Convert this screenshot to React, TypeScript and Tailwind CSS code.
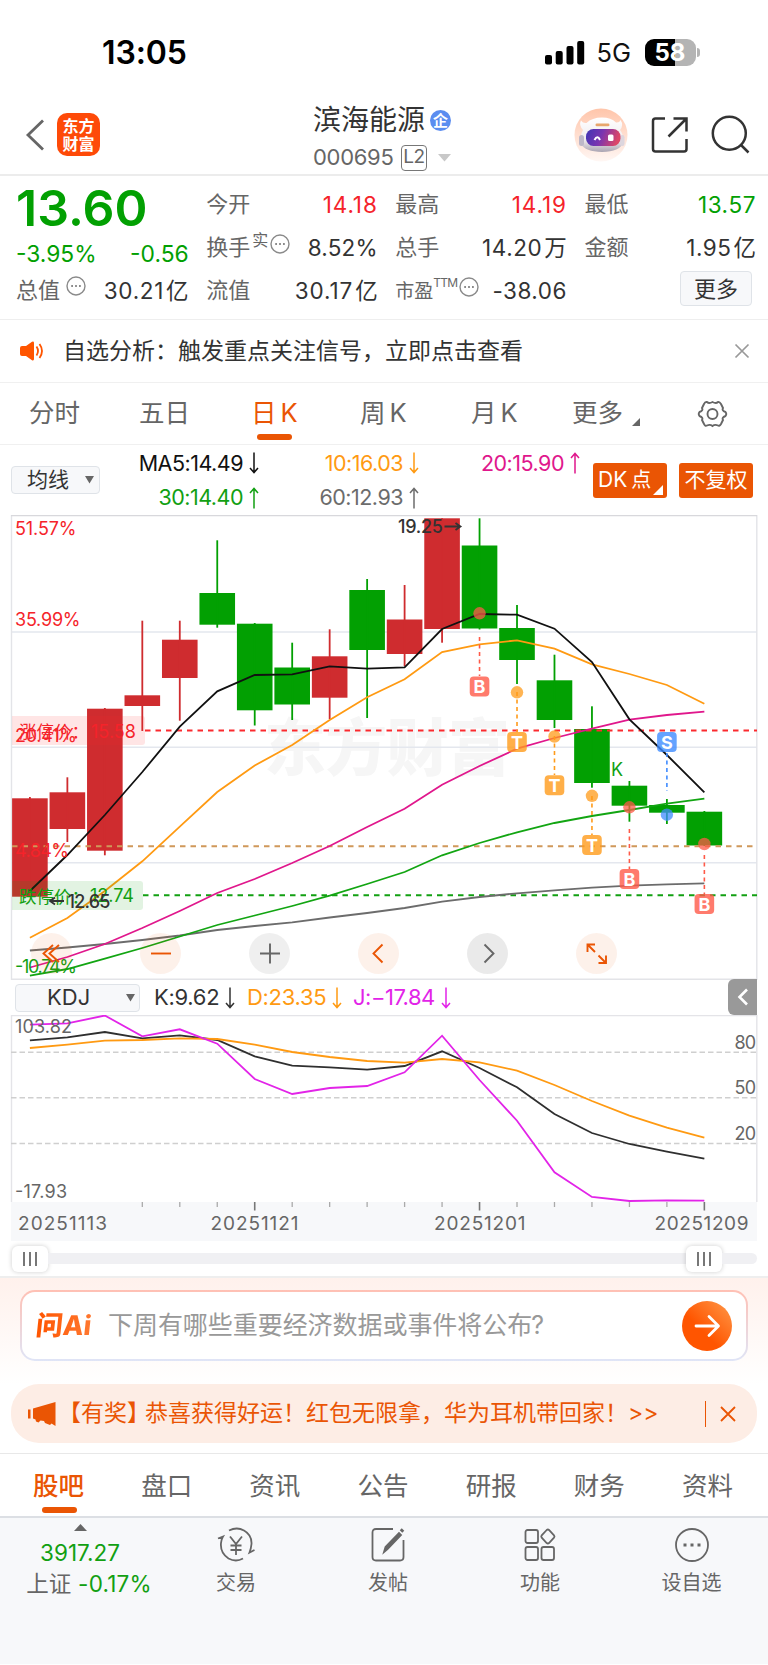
import React from "react";

const RED = "#cf2c2f";
const GREEN = "#02a002";

const px = (i: number) => 29.9 + 37.47 * i;

// colour, body top, body bottom, wick top, wick bottom
const candles: [string, number, number, number, number][] = [
  [RED, 798.3, 896.7, 797, 897],
  [RED, 792.3, 829, 777.3, 842],
  [RED, 708.7, 850.7, 708, 855.3],
  [RED, 695.3, 706, 620.7, 731],
  [RED, 639.7, 678, 620.7, 720.7],
  [GREEN, 593, 624.7, 540.3, 627.7],
  [GREEN, 623.7, 710.3, 623, 725.5],
  [GREEN, 667.5, 704.5, 642.7, 720],
  [RED, 656.3, 697.7, 629.3, 719],
  [GREEN, 590, 650, 579, 718],
  [RED, 619.5, 654, 585, 666],
  [RED, 518.3, 629, 518.3, 642.7],
  [GREEN, 545.5, 628.5, 518.3, 629.5],
  [GREEN, 628, 660, 605, 684],
  [GREEN, 680.3, 720, 654.7, 728],
  [GREEN, 729, 783, 706.3, 787.7],
  [GREEN, 785.7, 805.7, 781, 821.7],
  [GREEN, 805, 812.7, 799, 824],
  [GREEN, 811.7, 845.5, 811, 846],
];

const averages: [string, number[]][] = [
  ["#6c6c6c", [950.5, 947.5, 944, 940, 935.5, 930, 926, 922.3, 917.5, 913, 908, 901.7, 897, 893.3, 890.3, 887.7, 885.7, 884.3, 883.3]],
  ["#12a512", [975.7, 969, 958.7, 948, 936.5, 925, 915.5, 906, 895.7, 884, 872, 855.3, 843, 832.3, 823, 816, 810, 803.7, 798.7]],
  ["#e0178c", [967.5, 957, 944, 928, 911, 893, 879, 863, 846, 827, 808.7, 784.7, 766, 748.7, 738, 728.7, 719.7, 715, 711.7]],
  ["#ff9a12", [937.7, 918, 891, 861.3, 826.7, 792, 765.5, 745, 720, 697.3, 679.3, 652, 644.3, 640.3, 648.7, 664.3, 674, 685, 703.7]],
  ["#111111", [891, 855, 815, 772, 726.7, 691.3, 675, 674.3, 666.3, 668.7, 667.3, 629, 614, 614.7, 628.7, 662, 719.3, 755, 792.3]],
];

const kdj: [string, number[]][] = [
  ["#2f2f2f", [1040.3, 1037.3, 1032, 1038.3, 1035.3, 1040, 1056.3, 1065.7, 1067.3, 1069.7, 1066, 1051.3, 1068, 1087.3, 1114, 1133, 1144, 1151.7, 1158.7]],
  ["#ff9a12", [1048, 1044.7, 1040.7, 1040, 1038.3, 1039, 1044.7, 1052, 1057, 1061, 1062.7, 1059, 1062.3, 1070.7, 1085, 1101, 1115.7, 1127.7, 1137.7]],
  ["#e224e8", [1024.7, 1023.3, 1015.5, 1036.3, 1029.3, 1043.7, 1079, 1094, 1088, 1086, 1072.3, 1035.7, 1080, 1120.7, 1172.3, 1197, 1201, 1200.3, 1200.7]],
];

// label, candle index, badge y, dot y, dash from, dash to, colour
const marks: [string, number, number, number, number, number, string][] = [
  ["B", 12, 686.5, 613.3, 637, 676, "#ff5a48"],
  ["T", 13, 742, 692.3, 692, 732, "#ff9b1a"],
  ["T", 14, 785.3, 736.5, 736, 775, "#ff9b1a"],
  ["T", 15, 845, 795.8, 796, 835, "#ff9b1a"],
  ["B", 16, 879, 807.3, 829, 869, "#ff5a48"],
  ["S", 17, 742, 814.7, 753, 791, "#3f8cff"],
  ["B", 18, 904, 844, 855, 894, "#ff5a48"],
];

const line = (ys: number[]) => ys.map((y, i) => `${px(i)},${y}`).join(" ");

function Txt({ x, y, w, fill, size = 18, weight = 400, children }: { x: number; y: number; w?: number; fill: string; size?: number; weight?: number; children: string }) {
  return (
    <text x={x} y={y} fill={fill} fontSize={size} fontWeight={weight} textLength={w} lengthAdjust="spacing">
      {children}
    </text>
  );
}

function PriceChart() {
  return (
    <svg className="block" width="768" height="465" viewBox="0 515 768 465">
      <text x="264" y="771" fontSize="62" fontWeight="900" fill="#f6f6f6" textLength="246">东方财富</text>
      <g stroke="#e4e7ee" strokeWidth="1.6">
        <path d="M11 632H757M11 747.2H757M11 862.7H757" />
      </g>
      <path d="M11.5 515V979.3H756.8V515" fill="none" stroke="#e3e4e8" strokeWidth="1.4" />
      <path d="M11 515.5H757" stroke="#d8d8dc" strokeWidth="1.6" />
      {candles.map(([c, t, b, wt, wb], i) => (
        <g key={i} fill={c}>
          <rect x={px(i) - 17.8} y={t} width="35.6" height={b - t} />
          <rect x={px(i) - 0.9} y={wt} width="1.8" height={wb - wt} />
        </g>
      ))}
      <g fill="none" strokeWidth="2" strokeDasharray="5.5 5">
        <path d="M145 730.5H757" stroke="#fb2a2f" />
        <path d="M12 846.2H757" stroke="#d0985a" />
        <path d="M143 895.3H757" stroke="#12a012" />
      </g>
      {averages.map(([c, ys]) => (
        <polyline key={c} points={line(ys)} fill="none" stroke={c} strokeWidth="1.8" />
      ))}
      <path d="M12 716H142q3 0 3 3V742q0 3-3 3H12Z" fill="#ff2a2a" fillOpacity="0.12" />
      <path d="M12 881H140q3 0 3 3V907q0 3-3 3H12Z" fill="#10a010" fillOpacity="0.12" />
      <Txt x={19} y={738} fill="#f5232a" size={17.5}>涨停价：</Txt>
      <Txt x={91} y={737.5} w={45} fill="#f5232a" size={18}>15.58</Txt>
      <Txt x={15} y={535} w={61.5} fill="#f5232a">51.57%</Txt>
      <Txt x={15} y={626} w={65.5} fill="#f5232a">35.99%</Txt>
      <Txt x={15} y={742} w={62} fill="#f5232a">20.41%</Txt>
      <Txt x={15} y={857} w={54} fill="#f5232a">4.84%</Txt>
      <Txt x={15} y={973} w={62} fill="#12a012">-10.74%</Txt>
      <Txt x={19} y={903} fill="#12a012" size={17.5}>跌停价：</Txt>
      <Txt x={90} y={902} w={44} fill="#12a012" size={18}>12.74</Txt>
      <Txt x={67.5} y={908} w={43} fill="#333333" size={18} weight={500}>12.65</Txt>
      <path d="M64 901H50M55 897.5L50 901L55 904.5" fill="none" stroke="#333" strokeWidth="1.8" />
      <Txt x={398} y={533} w={45} fill="#333333" size={18} weight={500}>19.25</Txt>
      <path d="M444.500 526.500H460M455.500 523L460.500 526.500L455.500 530" fill="none" stroke="#333" strokeWidth="1.8" />
      <Txt x={611} y={776} fill="#12a012" size={18}>K</Txt>
      {marks.map(([l, i, by, dy, a, b, c], n) => (
        <g key={n}>
          <path d={`M${px(i)} ${a}V${b}`} stroke={c} strokeWidth="1.6" strokeDasharray="4 3.500" />
          <circle cx={px(i)} cy={dy} r="6.2" fill={c} fillOpacity="0.75" />
          <rect x={px(i) - 9.8} y={by - 10} width="19.600" height="20" rx="4" fill={c} fillOpacity="0.8" />
          <text x={px(i)} y={by + 6.5} textAnchor="middle" fontSize="18" fontWeight="700" fill="#fff">{l}</text>
        </g>
      ))}
    </svg>
  );
}

function KdjChart() {
  return (
    <svg className="block" width="768" height="187" viewBox="0 1015 768 187">
      <path d="M11.500 1202V1015.500H756.800V1202" fill="none" stroke="#e4e4e8" strokeWidth="1.4" />
      <path d="M11 1052.300H757M11 1097.800H757M11 1143.500H757" stroke="#cfcfcf" strokeWidth="1.5" strokeDasharray="5.500 3" />
      {kdj.map(([c, ys]) => (
        <polyline key={c} points={line(ys)} fill="none" stroke={c} strokeWidth="1.8" />
      ))}
      <Txt x={15} y={1032.5} w={57} fill="#666">103.82</Txt>
      <Txt x={15} y={1198} w={52} fill="#666">-17.93</Txt>
      <Txt x={734.5} y={1048.500} w={21.5} fill="#666">80</Txt>
      <Txt x={734.5} y={1094} w={21.5} fill="#666">50</Txt>
      <Txt x={734.5} y={1139.500} w={21.5} fill="#666">20</Txt>
    </svg>
  );
}

function DateAxis() {
  return (
    <svg className="block" width="768" height="39" viewBox="0 1202 768 39">
      <rect x="11" y="1202" width="746" height="39" fill="#f7f8fa" />
      {candles.map((_, i) =>
        i < 3 ? null : (
          <path key={i} d={`M${px(i)} 1202V${i % 6 === 0 ? 1210.5 : 1207}`} stroke={i % 6 === 0 ? "#777" : "#aaa"} strokeWidth={i % 6 === 0 ? 1.6 : 1.3} />
        ),
      )}
      <Txt x={18} y={1230} w={89} fill="#666" size={19}>20251113</Txt>
      <Txt x={210.500} y={1230} w={88} fill="#666" size={19}>20251121</Txt>
      <Txt x={434} y={1230} w={91.5} fill="#666" size={19}>20251201</Txt>
      <Txt x={654.500} y={1230} w={94} fill="#666" size={19}>20251209</Txt>
    </svg>
  );
}

function More() {
  return (
    <svg width="20" height="20" viewBox="0 0 20 20" fill="none" stroke="#8a8a8a" strokeWidth="1.400">
      <circle cx="10" cy="10" r="9" />
      <path d="M5.200 10h1.800M9.100 10h1.800M13 10h1.800" strokeWidth="1.800" />
    </svg>
  );
}

function Arrow({ up = false }: { up?: boolean }) {
  return (
    <svg width="10" height="22" viewBox="0 0 10 22" fill="none" stroke="currentColor" strokeWidth="1.500" className={up ? "ml-1.5" : "ml-1.5 rotate-180"}>
      <path d="M5 21.500V1.500M1 6L5 1.500L9 6" />
    </svg>
  );
}

function Cell({ label, value, unit, color = "text-[#333]", track = "tracking-[0px]" }: { label: React.ReactNode; value: string; unit?: string; color?: string; track?: string }) {
  return (
    <div className="flex h-[43px] items-center justify-between">
      <span className="flex items-center text-[22px] text-[#666]">{label}</span>
      <span className={`flex text-[22.500px] ${track} ${color}`}>{value}{unit && <span className="ml-[2px] tracking-normal">{unit}</span>}</span>
    </div>
  );
}

function Stats() {
  return (
    <section className="grid h-[144px] grid-cols-4 gap-x-[17.500px] border-b border-[#eeeeee] pl-[17px] pr-3 pt-[7px]">
      <div className="-ml-px">
        <div className="mt-[-4px] h-[52px] text-[50px] leading-[58px] font-semibold tracking-[0px] text-[#02a002]">13.60</div>
        <div className="flex h-[38px] items-center justify-between pt-[8px] text-[22.800px] text-[#02a002]"><span>-3.95%</span><span>-0.56</span></div>
        <Cell label={<>总值<span className="mb-[10px] ml-1.5"><More /></span></>} value="30.21" unit="亿" track="tracking-[0.7px]" />
      </div>
      <div>
        <Cell label="今开" value="14.18" color="text-[#f5232a]" track="tracking-[0.9px]" />
        <Cell label={<>换手<span className="mb-4 ml-0.5 text-[16px]">实</span><span className="mb-2 ml-0.5"><More /></span></>} value="8.52%" track="tracking-[0.2px]" />
        <Cell label="流值" value="30.17" unit="亿" track="tracking-[0.9px]" />
      </div>
      <div>
        <Cell label="最高" value="14.19" color="text-[#f5232a]" track="tracking-[0.9px]" />
        <Cell label="总手" value="14.20" unit="万" track="tracking-[0.6px]" />
        <Cell label={<><span className="mt-1 text-[19px]">市盈</span><span className="mb-4 text-[12px] tracking-[-0.800px]">TTM</span><span className="mb-2 ml-0.5"><More /></span></>} value="-38.06" track="tracking-[0.5px]" />
      </div>
      <div>
        <Cell label="最低" value="13.57" color="text-[#02a002]" track="tracking-[0.6px]" />
        <Cell label="金额" value="1.95" unit="亿" track="tracking-[0.5px]" />
        <div className="flex justify-end pr-1 pt-[2px]">
          <button className="h-[35px] w-[72px] rounded-[4px] border-[1.500px] border-[#dfe3e8] bg-[#f7f8fa] text-[22px] leading-[30px] text-[#333]">更多</button>
        </div>
      </div>
    </section>
  );
}

function Robot() {
  return (
    <svg width="54" height="54" viewBox="0 0 54 54">
      <defs>
        <linearGradient id="halo" x1="0" y1="0" x2="0" y2="1"><stop stopColor="#ffc5aa" /><stop offset="1" stopColor="#fff7f4" /></linearGradient>
        <linearGradient id="visor" x1="0" y1="0" x2="1" y2="0.2"><stop stopColor="#3f35b4" /><stop offset="0.5" stopColor="#7a35b0" /><stop offset="1" stopColor="#dc4668" /></linearGradient>
        <linearGradient id="shell" x1="0" y1="0" x2="0" y2="1"><stop stopColor="#ffffff" /><stop offset="0.65" stopColor="#efebee" /><stop offset="1" stopColor="#aaa4b2" /></linearGradient>
      </defs>
      <circle cx="27" cy="27" r="26.500" fill="url(#halo)" />
      <path d="M9 22Q4.500 17 7 12.500Q9 15.500 12.500 15Q18 9.500 28 9.500Q37 9.500 42 14.500Q45.500 15 46.500 12Q50 17 46 22Q50 27 49 35Q46 43.500 28 44Q11 43.500 7 36Q5.500 28 9 22Z" fill="url(#shell)" />
      <rect x="5" y="27" width="5" height="11" rx="2.500" fill="#bdb8c8" />
      <rect x="46" y="27" width="4.500" height="11" rx="2.200" fill="#ddd6de" />
      <rect x="21.500" y="15.500" width="14" height="2.800" rx="1.400" fill="#e8a66c" />
      <rect x="12" y="21" width="34.500" height="17" rx="7.500" fill="url(#visor)" />
      <path d="M20.500 32Q23.500 26.500 26 32" fill="none" stroke="#fff" strokeWidth="2" />
      <rect x="34" y="26.500" width="5.500" height="6.500" rx="1.500" fill="#fff" />
    </svg>
  );
}

function Header() {
  return (
    <>
      <div className="flex h-[100px] items-start pl-[102px]">
        <span className="mt-[33px] text-[32px] leading-[40px] font-semibold tracking-[-0.1px] text-black">13:05</span>
        <div className="mt-[38px] ml-auto flex h-7 items-center pr-[68px]">
          <svg width="40" height="25" viewBox="0 0 40 25"><rect y="15" width="7" height="9.500" rx="2" /><rect x="10.700" y="11" width="7" height="13.500" rx="2" /><rect x="21.500" y="6" width="7" height="18.500" rx="2" /><rect x="32.200" y="1" width="7" height="23.500" rx="2" /></svg>
          <span className="ml-[12px] w-[48px] pt-[2px] text-[25.500px] leading-7 text-[#111]">5G</span>
          <div className="flex h-[27px] w-[51px] items-center justify-center rounded-[9px] bg-[linear-gradient(90deg,#000_58%,#b4b4b4_58%)] text-[24px] leading-[27px] font-bold text-white">58</div>
          <div className="ml-[1.500px] h-[9px] w-[3px] rounded-r-full bg-[#b4b4b4]" />
        </div>
      </div>
      <header className="flex h-[76px] items-start border-b-2 border-[#ececec] pl-[25px]">
        <svg className="mt-[19px]" width="20" height="32" viewBox="0 0 20 32" fill="none" stroke="#666" strokeWidth="2.800"><path d="M18 1.500L3 16L18 30.500" /></svg>
        <div className="mt-[13px] ml-3 flex h-[43px] w-[43px] flex-col items-center justify-center rounded-[10px] bg-[#fe4a08] text-[16px] leading-[18px] font-bold text-white"><span>东方</span><span>财富</span></div>
        <div className="ml-[213px] w-[261px]">
          <div className="flex h-[40px] items-center">
            <span className="text-[28px] text-[#333]">滨海能源</span>
            <span className="ml-[5px] flex h-[21px] w-[21px] items-center justify-center rounded-full bg-[#5b8df0] text-[15px] leading-[21px] font-bold text-white">企</span>
          </div>
          <div className="flex h-[35px] items-center">
            <span className="w-[88px] text-[22px] tracking-[-0.300px] text-[#666]">000695</span>
            <span className="flex h-[26px] w-[26px] items-center justify-center rounded-[4px] border-[1.500px] border-[#777] text-[19px] tracking-[-0.500px] text-[#666]">L2</span>
            <svg className="ml-[11px]" width="14" height="8" viewBox="0 0 14 8"><path d="M0 0H13L6.500 7.500Z" fill="#c8c8c8" /></svg>
          </div>
        </div>
        <div className="mt-2"><Robot /></div>
        <svg className="mt-[16px] ml-[23px]" width="38" height="38" viewBox="0 0 38 38" fill="none" stroke="#333" strokeWidth="2.500"><path d="M14 2.500H4.500Q2 2.500 2 5V33Q2 35.500 4.500 35.500H33Q35.500 35.500 35.500 33V23M22.500 2.500H35.500V15.500M35.500 2.500L17.500 20.500" /></svg>
        <svg className="mt-[15px] ml-[22px]" width="40" height="40" viewBox="0 0 40 40" fill="none" stroke="#333" strokeWidth="2.500"><circle cx="18.300" cy="18.300" r="16.500" /><path d="M30 30L37.500 37.500" /></svg>
      </header>
    </>
  );
}

function Notice() {
  return (
    <section className="flex h-[63px] items-center border-b-[1.500px] border-[#f0f0f0] pl-5 pr-[18px]">
      <svg width="25" height="20" viewBox="0 0 25 20"><path d="M2 5H6L12 .8Q14 0 14 2V18Q14 20 12 19.200L6 15H2Q0 15 0 13V7Q0 5 2 5Z" fill="#ff5500" /><path d="M16.500 5.500Q19.500 10 16.500 14.500M19.500 3Q24.500 10 19.500 17" fill="none" stroke="#ff5500" strokeWidth="1.800" /></svg>
      <span className="ml-[18px] text-[23px] text-[#333]">自选分析：触发重点关注信号，立即点击查看</span>
      <svg className="ml-auto" width="16" height="16" viewBox="0 0 16 16" stroke="#999" strokeWidth="1.700"><path d="M1.500 1.500L14.500 14.500M14.500 1.500L1.500 14.500" /></svg>
    </section>
  );
}

function Periods() {
  return (
    <nav className="flex h-[62px] items-center border-b-[1.500px] border-[#f0f0f0] pl-[29px] text-[25.500px] text-[#666]">
      <span className="w-[110px]">分时</span>
      <span className="w-[112px]">五日</span>
      <span className="relative flex w-[109px] gap-1 text-[#ea5504]">日<span>K</span><i className="absolute -bottom-[7px] left-[6px] h-[6px] w-[35px] rounded-[3px] bg-[#ea5504]" /></span>
      <span className="flex w-[111px] gap-1">周<span>K</span></span>
      <span className="flex w-[101px] gap-1">月<span>K</span></span>
      <span>更多</span>
      <svg className="mt-[16px] ml-[9px]" width="8" height="8"><path d="M8 0V8H0Z" fill="#666" /></svg>
      <svg className="ml-[57px]" width="31" height="30" viewBox="0 0 31 30" fill="none" stroke="#666" strokeWidth="1.900"><path d="M10 3Q12 5 15.500 3Q19 5 21 3Q22.500 2.500 24 5L26 9Q24.500 11.500 28.500 13Q30 15 28.500 17Q24.500 18.500 26 21L24 25Q22.500 27.500 21 26.500Q18 25 15.500 27Q13 25 10 26.500Q8 27.500 7 25L5 21Q6.500 18.500 2.500 17Q1 15 2.500 13Q6.500 11.500 5 9L7 5Q8 2.500 10 3Z" /><ellipse cx="15.500" cy="15" rx="5" ry="5" /></svg>
    </nav>
  );
}

function Ma({ children, color, up }: { children: string; color: string; up?: boolean }) {
  return <span className={`flex h-[34px] items-center justify-end ${color}`}>{children}<Arrow up={up} /></span>;
}

function Averages() {
  return (
    <section className="flex h-[70px] items-center pl-[11px] pr-[15px]">
      <div className="flex h-[28px] w-[89px] items-center justify-between rounded-[4px] border border-[#dfe3e8] bg-[#f7f8fa] pr-[5px] pl-[15px] text-[21px] text-[#333]">均线<svg width="9" height="8"><path d="M0 0H9L4.500 7.500Z" fill="#666" /></svg></div>
      <div className="grid h-[70px] w-[480px] grid-cols-[159px_160px_161px] pt-[1px] text-[21.500px] tracking-[-0.500px]">
        <Ma color="text-[#111]">MA5:14.49</Ma>
        <Ma color="text-[#ff9a12]">10:16.03</Ma>
        <Ma color="text-[#e0178c]" up>20:15.90</Ma>
        <Ma color="text-[#12a012]" up>30:14.40</Ma>
        <Ma color="text-[#6c6c6c]" up>60:12.93</Ma>
      </div>
      <div className="relative ml-auto flex h-[35px] w-[74px] items-center rounded-[3px] bg-[#ea5504] pl-[5px] text-[21px] text-white">DK<span className="ml-1 text-[20px]">点</span><svg className="absolute right-[4px] bottom-[3px]" width="10" height="10"><path d="M10 0V10H0Z" fill="#fff" /></svg></div>
      <div className="ml-[12px] flex h-[35px] w-[74px] items-center justify-center rounded-[3px] bg-[#ea5504] text-[21px] text-white">不复权</div>
    </section>
  );
}

const controls: [string, string, string][] = [
  ["bg-[#ea550415]", "#ea5504", "M22 12L12.500 20.500L22 29M28 12L18.500 20.500L28 29"],
  ["bg-[#ea550415]", "#ea5504", "M11 20.500H31"],
  ["bg-[#00000010]", "#666", "M11 20.500H31M21 10.500V30.500"],
  ["bg-[#ea550415]", "#ea5504", "M24.500 11.500L15.500 20.500L24.500 29.500"],
  ["bg-[#00000015]", "#666", "M17.500 11.500L26.500 20.500L17.500 29.500"],
  ["bg-[#ea550415]", "#ea5504", "M11.500 19V11.500H19M11.500 11.500L19 19M22.500 22.500L30 30M22.500 30H30V22.500"],
];

function KdjHeader() {
  return (
    <div className="relative flex h-[35px] items-center pl-[15px] text-[22px]">
      <div className="flex h-[28px] w-[125px] items-center justify-between rounded-[4px] border-[1.500px] border-[#dfe3e8] bg-[#f7f8fa] pr-[4px] pl-[31px] text-[#333]">KDJ<svg width="9" height="8"><path d="M0 0H9L4.500 7.500Z" fill="#666" /></svg></div>
      <span className="ml-[14px] flex w-[93px] items-center tracking-[-0.300px] text-[#333]">K:9.62<Arrow /></span>
      <span className="flex w-[106px] items-center tracking-[-0.300px] text-[#ff9a12]">D:23.35<Arrow /></span>
      <span className="flex items-center tracking-[-0.500px] text-[#e224e8]">J:−17.84<Arrow /></span>
      <div className="absolute top-[-1px] right-[11px] flex h-[36px] w-[29px] items-center justify-center rounded-l-[6px] bg-[#999]"><svg width="12" height="18" viewBox="0 0 12 18" fill="none" stroke="#fff" strokeWidth="2.600"><path d="M10 1.500L2.500 9L10 16.500" /></svg></div>
    </div>
  );
}

function Handle() {
  return (
    <div className="flex h-[26px] w-[36px] items-center justify-center gap-[4px] rounded-[6px] bg-white shadow-[0_0_5px_rgba(0,0,0,0.2)]">
      <i className="h-[14px] w-[1.800px] bg-[#777]" /><i className="h-[14px] w-[1.800px] bg-[#777]" /><i className="h-[14px] w-[1.800px] bg-[#777]" />
    </div>
  );
}

function Ask() {
  return (
    <section className="h-[108px] border-t-2 border-[#eeeeee] bg-[linear-gradient(#fff1ec,#ffffff)] px-5 pt-[12px]">
      <div className="rounded-[15px] bg-[linear-gradient(#ffc0b4,#dfe5f7)] p-[2px]">
        <div className="flex h-[67px] items-center rounded-[13px] bg-white pl-[14px] pr-[14px]">
          <span className="flex w-[59px] -skew-x-6 items-center bg-[linear-gradient(90deg,#ff5500,#ff7a33)] bg-clip-text text-[27px] leading-none font-black tracking-[0px] text-transparent">问<span className="font-extrabold">Ai</span></span>
          <span className="ml-[13px] text-[25px] tracking-[-0.050px] text-[#999]">下周有哪些重要经济数据或事件将公布<span className="-ml-px">?</span></span>
          <span className="ml-auto flex h-[50px] w-[50px] items-center justify-center rounded-full bg-[linear-gradient(225deg,#ff9a4a,#ff5500_60%)]"><svg width="27" height="24" viewBox="0 0 27 24" fill="none" stroke="#fff" strokeWidth="2.800" strokeLinecap="round" strokeLinejoin="round"><path d="M2 12H24M15 2.500L24.500 12L15 21.500" /></svg></span>
        </div>
      </div>
    </section>
  );
}

function Promo() {
  return (
    <section className="mx-[11px] flex h-[59px] items-center rounded-[28px] bg-[#fdede5] pl-[17px] pr-[21px] text-[#ea5504]">
      <svg width="28" height="24" viewBox="0 0 28 24" fill="#ea5504"><path d="M0 7.500H2.500V16.500H0ZM5 6.500L27.500 0V24L23.500 21.500L22 23L17 21L16 19L12.500 18.500L10.500 20.500L8 19.500L7.500 17.500L5 16.500Z" /></svg>
      <span className="ml-[2px] flex text-[23px] whitespace-nowrap"><span>【有奖】</span><span className="ml-[-5px]">恭喜获得好运！红包无限拿，华为耳机带回家！&gt;&gt;</span></span>
      <i className="mr-[14px] ml-auto h-[26px] w-[1.500px] bg-[#ea5504]" />
      <svg width="16" height="16" viewBox="0 0 16 16" stroke="#ea5504" strokeWidth="1.800"><path d="M1 1L15 15M15 1L1 15" /></svg>
    </section>
  );
}

function BottomBar() {
  return (
    <footer className="flex h-[148px] items-start border-t-2 border-[#dcdfe4] bg-[#f7f8fa] text-[20px] text-[#666]">
      <div className="flex w-[160px] flex-col items-center pt-[6px]">
        <svg width="13" height="7"><path d="M6.500 0L13 7H0Z" fill="#666" /></svg>
        <span className="mt-[6px] h-[31px] text-[22.500px] leading-[31px] text-[#12a012]">3917.27</span>
        <span className="h-[31px] pl-[18px] text-[22.500px] leading-[31px] tracking-[0.200px] whitespace-nowrap">上证 <span className="text-[#12a012]">-0.17%</span></span>
      </div>
      <div className="flex w-[152px] flex-col items-center pt-[8px]">
        <svg width="38" height="37" viewBox="0 0 38 37" fill="none" stroke="#666" strokeWidth="1.800"><path d="M12 4.500Q20 .5 27 4.500Q35 9 34.500 18Q34 23 32.500 26.500L37.500 24M26 32.500Q19 36.500 11.500 32.500Q3 27 4 17Q4.500 13 6 10.500L1 12.500M13 10.500L19 18L25 10.500M19 18V29M13.500 19.500H24.500M13.500 24H24.500" /></svg>
        <span className="mt-[5px] leading-[30px]">交易</span>
      </div>
      <div className="flex w-[152px] flex-col items-center pt-[8px]">
        <svg width="36" height="37" viewBox="0 0 36 37" fill="none" stroke="#666" strokeWidth="1.800"><path d="M23 3H6Q2.500 3 2.500 6.500V31Q2.500 34.500 6 34.500H30Q33.500 34.500 33.500 31V14" /><path d="M14 26L15.500 21L29 7L31 9L17.500 23Z" fill="#666" /><path d="M31 5.500L33 3.500" strokeWidth="3.500" /></svg>
        <span className="mt-[5px] leading-[30px]">发帖</span>
      </div>
      <div className="flex w-[152px] flex-col items-center pt-[8px]">
        <svg width="34" height="37" viewBox="0 0 34 37" fill="none" stroke="#666" strokeWidth="1.800"><rect x="2.500" y="4" width="12.500" height="13" rx="2" /><rect x="2.500" y="21" width="12.500" height="13" rx="2" /><rect x="18.500" y="21" width="12.500" height="13" rx="2" /><path d="M23.700 4L18.700 9.300Q17.800 10.500 18.700 11.700L23.700 17Q24.900 18 26 17L31 11.700Q32 10.500 31 9.300L26 4Q24.900 3 23.700 4Z" /></svg>
        <span className="mt-[5px] leading-[30px]">功能</span>
      </div>
      <div className="flex w-[151px] flex-col items-center pt-[8px]">
        <svg width="36" height="37" viewBox="0 0 36 37" fill="none" stroke="#666" strokeWidth="1.800"><circle cx="18" cy="19" r="16" /><path d="M9.500 19H12.500M16.500 19H19.500M23.500 19H26.500" strokeWidth="3" /></svg>
        <span className="mt-[5px] leading-[30px]">设自选</span>
      </div>
    </footer>
  );
}

export default function App() {
  return (
    <main className="flex h-[1665px] w-[768px] flex-col overflow-hidden bg-white font-['Inter','Noto_Sans_CJK_SC',sans-serif]">
      <Header />
      <Stats />
      <Notice />
      <Periods />
      <Averages />
      <div className="relative">
        <PriceChart />
        <div className="absolute top-[418px] left-[30.500px] flex gap-[68px]">
          {controls.map(([bg, c, d]) => (
            <div key={d} className={`h-[41px] w-[41px] rounded-full ${bg}`}>
              <svg width="41" height="41" viewBox="0 0 41 41" fill="none" stroke={c} strokeWidth="1.900"><path d={d} /></svg>
            </div>
          ))}
        </div>
      </div>
      <KdjHeader />
      <KdjChart />
      <DateAxis />
      <div className="flex h-[35px] items-center pl-[12px] pr-[11px]">
        <Handle />
        <div className="h-[11px] flex-1 bg-[#f0f0f3]" />
        <Handle />
        <div className="h-[11px] w-[35px] rounded-r-full bg-[#f0f0f3]" />
      </div>
      <Ask />
      <Promo />
      <nav className="mt-[10px] flex h-[63px] items-center justify-between border-t-[1.500px] border-[#e8e8e8] pt-[2px] pr-[35px] pl-[33px] text-[25.500px] text-[#666]">
        <span className="relative font-medium text-[#ea5504]">股吧<i className="absolute -bottom-[8px] left-[9px] h-[6px] w-[35px] rounded-[3px] bg-[#ea5504]" /></span>
        <span>盘口</span><span>资讯</span><span>公告</span><span>研报</span><span>财务</span><span>资料</span>
      </nav>
      <BottomBar />
    </main>
  );
}
